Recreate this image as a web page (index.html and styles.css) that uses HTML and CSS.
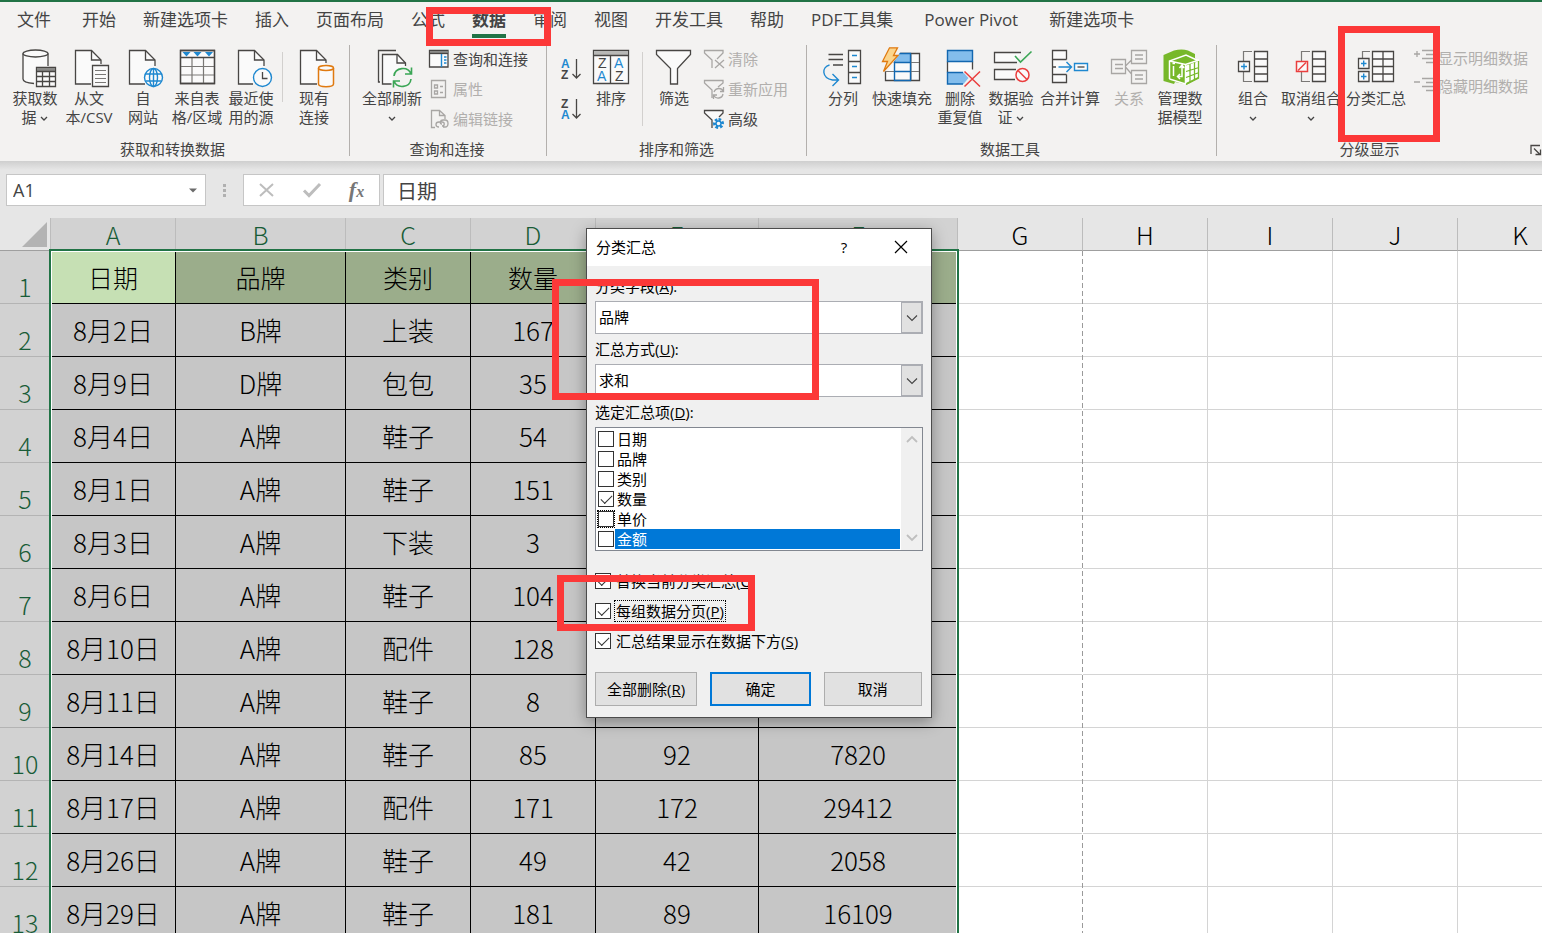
FILE: index.html
```html
<!DOCTYPE html>
<html lang="zh-CN">
<head>
<meta charset="utf-8">
<title>分类汇总</title>
<link rel="stylesheet" href="styles.css">
</head>
<body>
<header class="ribbon">
  <nav class="tabs">
    <a class="tab tab-roomy" href="#">文件</a>
    <a class="tab" href="#">开始</a>
    <a class="tab" href="#">新建选项卡</a>
    <a class="tab" href="#">插入</a>
    <a class="tab" href="#">页面布局</a>
    <a class="tab" href="#">公式</a>
    <a class="tab tab-active" href="#">数据</a>
    <a class="tab" href="#">审阅</a>
    <a class="tab" href="#">视图</a>
    <a class="tab" href="#">开发工具</a>
    <a class="tab" href="#">帮助</a>
    <a class="tab tab-roomy" href="#">PDF工具集</a>
    <a class="tab tab-roomy" href="#">Power Pivot</a>
    <a class="tab" href="#">新建选项卡</a>
  </nav>
  <div class="groups">
    <section class="group group-get">
      <div class="tools">
        <button class="big w54"><svg class="icon" viewBox="0 0 44 42"><path class="paper" d="M10 6.500V32c0 2 5 4 12.500 4h1V20H35V6.500c0-2-5.500-3.500-12.500-3.500S10 4.500 10 6.500z"/><path class="ink" d="M35 19V6.500M10 6.500V32c0 2.500 5 4 11 4.500"/><ellipse class="ink paper" cx="22.500" cy="6.500" rx="12.500" ry="3.500"/><path class="ink paper" d="M23.500 20.500h19v19h-19z"/><path fill="#8a8a88" d="M24 21h18v3H24z"/><path class="ink" d="M23.500 24.500h19M23.500 29.500h19M23.500 34.500h19M29.500 24.500v15M36.500 24.500v15"/></svg><span>获取数<br>据 <svg class="chev" viewBox="0 0 8 5"><path d="M1 1l3 3 3-3"/></svg></span></button>
        <button class="big w54"><svg class="icon" viewBox="0 0 44 42"><path class="ink paper" d="M24 37H8.500V3.500h16L34 13v4"/><path class="ink" d="M24.500 3.500V13H34"/><path class="ink paper" d="M25.500 18.500h16v21h-16z"/><path class="grey" d="M28 23.500h11M28 27.500h11M28 31.500h11M28 35.500h11"/></svg><span>从文<br>本/CSV</span></button>
        <button class="big w54"><svg class="icon" viewBox="0 0 44 42"><path class="ink paper" d="M24 37H8.500V3.500h16L34 13v6"/><path class="ink" d="M24.500 3.500V13H34"/><g class="blue"><circle class="paper" cx="32.500" cy="30.500" r="9"/><ellipse cx="32.500" cy="30.500" rx="4" ry="9"/><path d="M32.500 21.500v18M24.500 27h16M24.500 34h16"/></g></svg><span>自<br>网站</span></button>
        <button class="big w54"><svg class="icon" viewBox="0 0 44 42"><path class="ink paper" d="M5.500 3.500h34v33h-34z"/><path class="grey" d="M17 11v26M28.500 11v26M6 19.500h33M6 28h33"/><path class="ink" d="M5.500 10.500h34M5.500 3.500h34v33h-34z"/><path fill="#1e88d0" d="M7.500 5h8l-4 4.500zM18.500 5h8l-4 4.500zM30 5h8l-4 4.500z"/></svg><span>来自表<br>格/区域</span></button>
        <button class="big w54"><svg class="icon" viewBox="0 0 44 42"><path class="ink paper" d="M24 37H9.500V3.500h16L35 13v6"/><path class="ink" d="M25.500 3.500V13H35"/><circle class="blue paper" cx="33.500" cy="30.500" r="9"/><path class="ink" d="M33.500 25v6.500h5"/></svg><span>最近使<br>用的源</span></button>
        <i class="sep"></i>
        <button class="big w54"><svg class="icon" viewBox="0 0 44 42"><path class="ink paper" d="M25 37H8.500V3.500h16L34 13v3"/><path class="ink" d="M24.500 3.500V13H34"/><path class="orange paper" d="M26.500 21v16c0 3.500 15 3.500 15 0V21"/><ellipse class="orange paper" cx="34" cy="21" rx="7.500" ry="2.500"/></svg><span>现有<br>连接</span></button>
      </div>
      <h2>获取和转换数据</h2>
    </section>

    <section class="group group-query">
      <div class="tools">
        <button class="big w64"><svg class="icon" viewBox="0 0 44 42"><path class="ink" d="M10 35H8.500V3.500H26"/><path class="ink paper" d="M21.500 37h-9V7.500h15L35.500 16v3"/><path class="ink" d="M27 7.500V16h8.500"/><circle cx="32.500" cy="30.500" r="10" fill="#f3f2f1"/><path class="green" d="M24 29c1-9 14-10 17-2M41.500 20.500V27H35M41 32c-1 9-14 10-17 2M23.500 40.500V34H30"/></svg><span>全部刷新<br><svg class="chev" viewBox="0 0 8 5"><path d="M1 1l3 3 3-3"/></svg></span></button>
        <div class="stack stack-inset">
          <button class="small"><svg viewBox="0 0 22 20"><path class="ink paper" d="M1.500 1.500h18.500v16.500H1.500z"/><path fill="#8a8a88" d="M2 2h17.500v2.500H2z"/><path class="ink" d="M1.500 4.500H20"/><path class="blue" d="M13.500 5v13M16 8h2.500M16 11h2.500M16 14h2.500"/></svg>查询和连接</button>
          <button class="small" disabled><svg viewBox="0 0 22 20"><path class="faint" d="M3.500 1.500h14v17h-14zM6.500 6h3v3h-3zM6.500 12h3v3h-3zM12 7.500h3M12 13.500h3"/></svg>属性</button>
          <button class="small" disabled><svg viewBox="0 0 22 20"><path class="faint" d="M7 18.500H3.500v-17h8l5.500 5V10M11.500 1.500v5H17M11 18c-4 0-4-5 0-5h3c3 0 3 4 0 4M14 15c-3 0-2-4 1-4h2c4 0 4 7 0 7h-2"/></svg>编辑链接</button>
        </div>
      </div>
      <h2>查询和连接</h2>
    </section>

    <section class="group group-sort">
      <div class="tools">
        <div class="sorts">
          <button class="sort" aria-label="升序"><svg viewBox="0 0 24 24"><text class="ltr ltr-blue" x="2" y="11">A</text><text class="ltr" x="2" y="22">Z</text><path class="ink" d="M17.500 2v19M13.500 17l4 4 4-4"/></svg></button>
          <button class="sort" aria-label="降序"><svg viewBox="0 0 24 24"><text class="ltr" x="2" y="11">Z</text><text class="ltr ltr-blue" x="2" y="22">A</text><path class="ink" d="M17.500 2v19M13.500 17l4 4 4-4"/></svg></button>
        </div>
        <button class="big w54"><svg class="icon" viewBox="0 0 44 42"><path class="ink paper" d="M4.500 3.500h35v33h-35z"/><path fill="#b8b8b6" d="M5 4h34v4H5z"/><path class="ink" d="M4.500 8.500h35M21.500 8.500v28"/><text class="ltr ltr-thin" x="9" y="21">Z</text><text class="ltr ltr-thin ltr-blue" x="8" y="34">A</text><text class="ltr ltr-thin ltr-blue" x="25" y="21">A</text><text class="ltr ltr-thin" x="26" y="34">Z</text></svg><span>排序</span></button>
        <i class="sep sep-tall"></i>
        <button class="big w54"><svg class="icon" viewBox="0 0 44 42"><path class="ink paper" d="M4.500 3.500h34v4l-13 14v15.500h-7V21.500l-14-14z"/></svg><span>筛选</span></button>
        <div class="stack">
          <button class="small" disabled><svg viewBox="0 0 22 20"><path class="faint" d="M9 19V11L1.500 4V1.500H20V4l-6 6M12 11l9 8M21 11l-9 8"/></svg>清除</button>
          <button class="small" disabled><svg viewBox="0 0 22 20"><path class="faint" d="M9 19V11L1.500 4V1.500H20V4l-5 4M11 13c2-5 8-4 9-1M20.500 8v4.500H17M20 15c-1 5-7 5-9 2M10.500 20v-4H14"/></svg>重新应用</button>
          <button class="small"><svg viewBox="0 0 22 20"><path class="ink paper" d="M9 19V11L1.500 4V1.500H20V4l-4 4"/><path fill="none" stroke="#1e88d0" stroke-width="3" stroke-dasharray="2.500 1.690" d="M15.500 10.500a4 4 0 1 1-.01 0z"/><circle class="blue paper" cx="15.500" cy="14.500" r="2.500"/></svg>高级</button>
        </div>
      </div>
      <h2>排序和筛选</h2>
    </section>

    <section class="group group-data">
      <div class="tools">
        <button class="big w54"><svg class="icon" viewBox="0 0 44 42"><path class="ink" d="M7.500 7.500H22M7.500 12.500H22M12 18h10"/><path class="ink paper" d="M27.500 3.500h12v33h-12z"/><path class="ink" d="M27.500 14.500h12M27.500 25.500h12"/><path class="blue" d="M31 8.500h5M31 19.500h5M31 30.500h5M8.500 18c-8 2-8 13 3 15h6M11.500 27l6 6-6 6"/></svg><span>分列</span></button>
        <button class="big w64"><svg class="icon" viewBox="0 0 44 42"><path class="ink paper" d="M5.500 6.500h34v27h-34z"/><path class="grey" d="M5 15.500h34M5 24.500h34M31 7v26"/><path fill="#83bdec" d="M14.500 6.500h16v9h-16z"/><path class="navy" d="M14.500 6.500h16v27h-16zM14.500 15.500h16M14.500 24.500h16"/><path fill="#f3f2f1" d="M3 4h18L8 24H3z"/><path fill="#fbd58c" stroke="#e07a10" stroke-width="1.300" d="M9.500.8h8l-4 7.700h4.500L3.500 24.500l4-10h-5z"/></svg><span>快速填充</span></button>
        <button class="big w52"><svg class="icon" viewBox="0 0 44 42"><path class="paper" d="M9.500 14.500h25v11h-25z"/><path class="ink" d="M9.500 14.500v11M34.500 14.500v8"/><path fill="#83bdec" d="M9.500 3.500h25v11h-25zM9.500 25.500h16l5 5.500-5 6h-16z"/><path class="navy" d="M9.500 3.500h25v11h-25zM25 37H9.500V25.500H25"/><path class="red" d="M26.500 24.500l15.500 15M42 24.500l-15.500 15"/></svg><span>删除<br>重复值</span></button>
        <button class="big w50"><svg class="icon" viewBox="0 0 44 42"><path class="ink paper" d="M32 5.500H5.500v10H28M27 22.500H5.500v10H26"/><path class="green" d="M26 9l5.500 6L42.500 4.500"/><circle class="red paper" cx="33.500" cy="28" r="6.500"/><path class="red" d="M29 23.500l9 9"/></svg><span>数据验<br>证 <svg class="chev" viewBox="0 0 8 5"><path d="M1 1l3 3 3-3"/></svg></span></button>
        <button class="big w68"><svg class="icon" viewBox="0 0 44 42"><path class="paper" d="M4.500 3.500h14v32h-14z"/><path class="ink" d="M18.500 12.500v-9h-14v32h14v-8M4.500 12.500h14M4.500 27.500h14M4.500 20H8"/><path class="blue" d="M10.500 20h13M18.500 15l5 5-5 5"/><path class="blue paper" d="M26.500 16.500h13v7h-13z"/><path class="ink" d="M29.500 20h7"/></svg><span>合并计算</span></button>
        <button class="big w50" disabled><svg class="icon" viewBox="0 0 44 42"><path class="faint" d="M4.500 12.500h14v14h-14zM24.500 3.500h15v13h-15zM24.500 23.500h15v13h-15zM18.500 19l6-6M18.500 20l6 7M8 17.500h8M8 21.500h8M28 8h8M28 12h8M28 28h8M28 32h8"/></svg><span>关系</span></button>
        <button class="big w52"><svg class="icon" viewBox="0 0 44 42"><path fill="#77b82a" d="M5.500 8L16 3.500c5-1.500 10-1.500 14 0L37 7v4.500l4 2V31l-12 6.500L17 35l-1 2-10.500-3z"/><g fill="none" stroke="#fff" stroke-width="1.500"><path d="M11.500 32V14L28 8l13 6M11.500 14l16 3.500L41 13M11.500 32L27.500 37V17.500M15.500 19v10M14.500 16.500h2.500M20 29.500h4V19M21.500 21l2.500-3 2 3M22 27l-2.500 2.500L22 32"/></g><path fill="#fff" d="M28 18.500l12-4V30l-12 6z"/><path fill="none" stroke="#77b82a" stroke-width="1.300" d="M28 24.500l13-4M28 30.500l13-5M32 17v18M36.500 15.500V33M40.500 14v17L28 37.500"/></svg><span>管理数<br>据模型</span></button>
      </div>
      <h2>数据工具</h2>
    </section>

    <section class="group group-outline">
      <div class="tools">
        <button class="big w56"><svg class="icon" viewBox="0 0 44 42"><path class="grey" d="M21 4.500h-8.500v30H21"/><path class="ink paper" d="M23.500 4.500h13v30h-13z"/><path class="ink" d="M23.500 12h13M23.500 19.500h13M23.500 27h13"/><path class="ink paper" d="M7.500 14.500h11v10h-11z"/><path class="blue" d="M13 16.500v6M10 19.500h6"/></svg><span>组合<br><svg class="chev" viewBox="0 0 8 5"><path d="M1 1l3 3 3-3"/></svg></span></button>
        <button class="big w60"><svg class="icon" viewBox="0 0 44 42"><path class="grey" d="M21 4.500h-8.500v30H21"/><path class="ink paper" d="M23.500 4.500h13v30h-13z"/><path class="ink" d="M23.500 12h13M23.500 19.500h13M23.500 27h13"/><path class="red paper" d="M7.500 14.500h11v10h-11z"/><path class="red" d="M9 23.500l8-8"/></svg><span>取消组合<br><svg class="chev" viewBox="0 0 8 5"><path d="M1 1l3 3 3-3"/></svg></span></button>
        <button class="big w70"><svg class="icon" viewBox="0 0 44 42"><path class="grey" d="M16 4.500H8.500V11"/><path class="ink paper" d="M18.500 4.500h21v30h-21z"/><path class="ink" d="M18.500 12h21M18.500 19.500h21M18.500 27h21M29 4.500v30"/><path class="ink paper" d="M4.500 11.500h10.500v10H4.500zM4.500 24.500h10.500v10H4.500z"/><path class="blue" d="M9.700 13.500v6M7 16.500h5.500M9.700 26.500v6M7 29.500h5.500"/></svg><span>分类汇总</span></button>
        <div class="stack stack-tight">
          <button class="small" disabled><svg viewBox="0 0 22 20"><path class="faint" d="M1 6h6M4 3v6M9 2.500h11M13 6.500h7M9 10.500h11M13 14.500h7"/></svg>显示明细数据</button>
          <button class="small" disabled><svg viewBox="0 0 22 20"><path class="faint" d="M1 6h6M9 2.500h11M13 6.500h7M9 10.500h11M13 14.500h7"/></svg>隐藏明细数据</button>
        </div>
      </div>
      <h2>分级显示</h2>
      <button class="launcher" aria-label="分级显示设置"><svg viewBox="0 0 12 12"><path class="ink" d="M1 10V1.500h9M4 4.500l6 6M10.500 5.500v5h-5"/></svg></button>
    </section>
  </div>
</header>

<div class="formula-bar">
  <div class="name-box">
    <input type="text" value="A1" aria-label="名称框">
    <button aria-label="名称列表"><svg viewBox="0 0 8 5"><path fill="#6b6b6b" d="M0 .5h8l-4 4z"/></svg></button>
  </div>
  <div class="dots"><i></i><i></i><i></i></div>
  <div class="entry">
    <button aria-label="取消输入"><svg viewBox="0 0 18 16"><path fill="none" stroke="#bdbdbd" stroke-width="2" d="M2 2l13 12M15 2L2 14"/></svg></button>
    <button aria-label="确认输入"><svg viewBox="0 0 18 16"><path fill="none" stroke="#bdbdbd" stroke-width="3" d="M1 8.500l5 5L17 2"/></svg></button>
    <button class="fx" aria-label="插入函数">f<small>x</small></button>
  </div>
  <input class="formula" type="text" value="日期" aria-label="编辑栏">
</div>

<main class="sheet">
  <table class="grid">
    <colgroup><col class="c-num"><col class="c-std"><col class="c-b"><col class="c-std"><col class="c-std"><col class="c-e"><col class="c-f"><col class="c-std"><col class="c-std"><col class="c-std"><col class="c-std"><col class="c-std"></colgroup>
    <thead>
      <tr><th class="corner"><svg viewBox="0 0 25 25"><path fill="#b3b3b3" d="M25 0v25H0z"/></svg></th><th class="on">A</th><th class="on">B</th><th class="on">C</th><th class="on">D</th><th class="on">E</th><th class="on">F</th><th>G</th><th>H</th><th>I</th><th>J</th><th>K</th></tr>
    </thead>
    <tbody>
      <tr class="titles"><th>1</th><td class="sel active">日期</td><td class="sel">品牌</td><td class="sel">类别</td><td class="sel">数量</td><td class="sel"></td><td class="sel"></td><td></td><td></td><td></td><td></td><td></td></tr>
      <tr><th>2</th><td class="sel">8月2日</td><td class="sel">B牌</td><td class="sel">上装</td><td class="sel">167</td><td class="sel"></td><td class="sel"></td><td></td><td></td><td></td><td></td><td></td></tr>
      <tr><th>3</th><td class="sel">8月9日</td><td class="sel">D牌</td><td class="sel">包包</td><td class="sel">35</td><td class="sel"></td><td class="sel"></td><td></td><td></td><td></td><td></td><td></td></tr>
      <tr><th>4</th><td class="sel">8月4日</td><td class="sel">A牌</td><td class="sel">鞋子</td><td class="sel">54</td><td class="sel"></td><td class="sel"></td><td></td><td></td><td></td><td></td><td></td></tr>
      <tr><th>5</th><td class="sel">8月1日</td><td class="sel">A牌</td><td class="sel">鞋子</td><td class="sel">151</td><td class="sel"></td><td class="sel"></td><td></td><td></td><td></td><td></td><td></td></tr>
      <tr><th>6</th><td class="sel">8月3日</td><td class="sel">A牌</td><td class="sel">下装</td><td class="sel">3</td><td class="sel"></td><td class="sel"></td><td></td><td></td><td></td><td></td><td></td></tr>
      <tr><th>7</th><td class="sel">8月6日</td><td class="sel">A牌</td><td class="sel">鞋子</td><td class="sel">104</td><td class="sel"></td><td class="sel"></td><td></td><td></td><td></td><td></td><td></td></tr>
      <tr><th>8</th><td class="sel">8月10日</td><td class="sel">A牌</td><td class="sel">配件</td><td class="sel">128</td><td class="sel"></td><td class="sel"></td><td></td><td></td><td></td><td></td><td></td></tr>
      <tr><th>9</th><td class="sel">8月11日</td><td class="sel">A牌</td><td class="sel">鞋子</td><td class="sel">8</td><td class="sel"></td><td class="sel"></td><td></td><td></td><td></td><td></td><td></td></tr>
      <tr><th>10</th><td class="sel">8月14日</td><td class="sel">A牌</td><td class="sel">鞋子</td><td class="sel">85</td><td class="sel">92</td><td class="sel">7820</td><td></td><td></td><td></td><td></td><td></td></tr>
      <tr><th>11</th><td class="sel">8月17日</td><td class="sel">A牌</td><td class="sel">配件</td><td class="sel">171</td><td class="sel">172</td><td class="sel">29412</td><td></td><td></td><td></td><td></td><td></td></tr>
      <tr><th>12</th><td class="sel">8月26日</td><td class="sel">A牌</td><td class="sel">鞋子</td><td class="sel">49</td><td class="sel">42</td><td class="sel">2058</td><td></td><td></td><td></td><td></td><td></td></tr>
      <tr><th>13</th><td class="sel">8月29日</td><td class="sel">A牌</td><td class="sel">鞋子</td><td class="sel">181</td><td class="sel">89</td><td class="sel">16109</td><td></td><td></td><td></td><td></td><td></td></tr>
    </tbody>
  </table>
  <div class="selection"></div>
  <div class="page-break"></div>
</main>

<form class="dialog" role="dialog" aria-labelledby="dlg-title">
  <div class="dialog-title">
    <span id="dlg-title">分类汇总</span>
    <button type="button" class="help" aria-label="帮助">?</button>
    <button type="button" class="close" aria-label="关闭"><svg viewBox="0 0 14 14"><path fill="none" stroke="#000" stroke-width="1.200" d="M1 1l12 12M13 1L1 13"/></svg></button>
  </div>
  <div class="dialog-body">
    <label class="caption" for="field">分类字段(<u>A</u>):</label>
    <div class="combo"><select id="field"><option>品牌</option></select><span><svg viewBox="0 0 12 8"><path d="M1 1.500l5 5 5-5"/></svg></span></div>
    <label class="caption" for="method">汇总方式(<u>U</u>):</label>
    <div class="combo"><select id="method"><option>求和</option></select><span><svg viewBox="0 0 12 8"><path d="M1 1.500l5 5 5-5"/></svg></span></div>
    <div class="caption" id="items">选定汇总项(<u>D</u>):</div>
    <div class="list" role="group" aria-labelledby="items">
      <div class="list-items">
        <label><input type="checkbox"><span>日期</span></label>
        <label><input type="checkbox"><span>品牌</span></label>
        <label><input type="checkbox"><span>类别</span></label>
        <label><input type="checkbox" checked><span>数量</span></label>
        <label class="focus"><input type="checkbox"><span>单价</span></label>
        <label class="picked"><input type="checkbox"><span>金额</span></label>
      </div>
      <div class="scroll"><svg viewBox="0 0 12 8"><path d="M1 7l5-5 5 5"/></svg><svg viewBox="0 0 12 8"><path d="M1 1l5 5 5-5"/></svg></div>
    </div>
    <div class="checks">
      <label><input type="checkbox" checked><span>替换当前分类汇总(<u>C</u>)</span></label>
      <label><input type="checkbox" checked><span class="dotted">每组数据分页(<u>P</u>)</span></label>
      <label><input type="checkbox" checked><span>汇总结果显示在数据下方(<u>S</u>)</span></label>
    </div>
    <div class="actions">
      <button type="button">全部删除(<u>R</u>)</button>
      <button type="submit" class="primary">确定</button>
      <button type="button">取消</button>
    </div>
  </div>
</form>

<div class="mark mark-tab"></div>
<div class="mark mark-subtotal"></div>
<div class="mark mark-fields"></div>
<div class="mark mark-paging"></div>
</body>
</html>
```
FILE: styles.css
```css
* { box-sizing: border-box; }
html, body { height: 100%; }
body {
  margin: 0;
  position: relative;
  display: flex;
  flex-direction: column;
  overflow: hidden;
  background: #fff;
  color: #444;
  font: 15px/20px "Open Sans", "Noto Sans CJK SC", sans-serif;
}
button, input, select { font: inherit; color: inherit; margin: 0; padding: 0; border: 0; background: none; border-radius: 0; }
svg { display: block; flex: none; overflow: visible; }

/* Ribbon */
.ribbon { flex: none; border-top: 2px solid #217346; background: #f3f2f1; padding-bottom: 5px; }
.tabs { display: flex; gap: 27px; height: 43px; padding-left: 17px; }
.tab { position: relative; height: 36px; line-height: 36px; font-size: 17px; color: #444; text-decoration: none; white-space: nowrap; }
.tab-roomy { padding-right: 4px; }
.tab-active { font-weight: bold; }
.tab-active::after { content: ""; position: absolute; left: 0; right: 0; bottom: 0; height: 4px; background: #217346; }
.groups { display: flex; }
.group { position: relative; flex: none; display: flex; flex-direction: column; height: 111px; border-right: 1px solid #b3b0ad; }
.group-get { width: 350px; padding-left: 8px; }
.group-query { width: 197px; padding-left: 10px; }
.group-sort { width: 260px; padding-left: 12px; }
.group-data { width: 410px; padding-left: 9px; }
.group-outline { flex: 1; padding-left: 8px; border-right: 0; }
.tools { display: flex; align-items: flex-start; flex: 1; }
.group h2 { margin: 0; padding-right: 12px; font-size: 15px; font-weight: normal; line-height: 20px; text-align: center; height: 17px; }
.group-outline h2 { padding-right: 28px; }
.big { flex: none; padding-top: 2px; display: flex; flex-direction: column; align-items: center; line-height: 19px; text-align: center; white-space: nowrap; }
.icon { width: 44px; height: 42px; }
.w50 { width: 50px; }
.w52 { width: 52px; }
.w54 { width: 54px; }
.w56 { width: 56px; }
.w60 { width: 60px; }
.w64 { width: 64px; }
.w68 { width: 68px; }
.w70 { width: 70px; }
.chev { display: inline-block; width: 8px; height: 5px; vertical-align: 2px; }
.chev path { fill: none; stroke: #444; stroke-width: 1.3; }
.sep { width: 1px; height: 50px; margin: 7px 4px 0; background: #d2d0ce; }
.sep-tall { height: 74px; }
.stack { display: flex; flex-direction: column; }
.stack-inset { padding-left: 2px; }
.small { display: flex; align-items: center; gap: 3px; height: 30px; padding: 0 2px 2px; white-space: nowrap; }
.small svg { width: 22px; height: 20px; }
.stack-tight .small { height: 28px; }
button:disabled { color: #b1afad; }
.sorts { display: flex; flex-direction: column; padding-top: 4px; }
.sort { width: 25px; height: 40px; }
.sort svg { width: 24px; height: 24px; }
.launcher { position: absolute; right: 0; bottom: 0; }
.launcher svg { width: 12px; height: 12px; }

.ink { fill: none; stroke: #484644; stroke-width: 1.3; }
.grey { fill: none; stroke: #7a7876; stroke-width: 1.2; }
.faint { fill: none; stroke: #a8a6a4; stroke-width: 1.3; }
.blue { fill: none; stroke: #1e88d0; stroke-width: 1.4; }
.navy { fill: none; stroke: #1267b0; stroke-width: 1.4; }
.green { fill: none; stroke: #3aa655; stroke-width: 1.6; }
.orange { fill: none; stroke: #e07a10; stroke-width: 1.5; }
.red { fill: none; stroke: #ea3e3e; stroke-width: 1.5; }
.paper { fill: #fafafa; }
.ltr { font: bold 12px/1 "Liberation Sans", sans-serif; fill: #444; }
.ltr-thin { font-weight: normal; font-size: 14px; }
.ltr-blue { fill: #1e88d0; }

/* Formula bar */
.formula-bar {
  flex: none;
  display: flex;
  height: 57px;
  padding: 13px 0 12px 6px;
  background: linear-gradient(#cfcfcf, #e6e6e6 9px);
  color: #444;
}
.name-box { display: flex; width: 200px; background: #fff; border: 1px solid #c6c6c6; }
.name-box input { flex: 1; min-width: 0; padding-left: 6px; font-size: 18px; }
.name-box button { width: 24px; display: grid; place-items: center; }
.name-box svg { width: 8px; height: 5px; }
.dots { width: 37px; display: flex; flex-direction: column; align-items: center; justify-content: center; gap: 2px; }
.dots i { width: 3px; height: 3px; background: #b0b0b0; }
.entry { display: flex; width: 137px; margin-right: 3px; background: #fff; border: 1px solid #c6c6c6; }
.entry button { flex: 1; display: grid; place-items: center; }
.entry svg { width: 18px; height: 16px; }
.entry .fx { display: flex; align-items: center; justify-content: center; font: italic bold 22px "Liberation Serif", serif; color: #777; }
.fx small { font-size: 16px; padding-top: 4px; }
.formula { flex: 1; min-width: 0; padding-left: 13px; background: #fff; border: 1px solid #c6c6c6; border-right: 0; font-size: 20px; }

/* Worksheet */
.sheet { position: relative; flex: 1; min-height: 0; overflow: hidden; font-family: "Noto Sans CJK SC", sans-serif; font-weight: 300; color: #000; }
.grid { width: 1583px; table-layout: fixed; border-spacing: 0; font-size: 26px; line-height: 30px; }
.c-num { width: 51px; }
.c-std { width: 125px; }
.c-b { width: 170px; }
.c-e { width: 163px; }
.c-f { width: 199px; }
.grid th, .grid td { padding: 0; text-align: center; font-weight: 300; }
.grid thead th { height: 33px; background: #e6e6e6; border-right: 1px solid #bcbcbc; border-bottom: 1px solid #9f9f9f; font-size: 25px; }
.grid thead .on { background: #d2d2d2; color: #185c37; }
.grid thead .corner { padding: 0 3px 3px 0; vertical-align: bottom; }
.corner svg { width: 25px; height: 25px; margin-left: auto; }
.grid tbody th { height: 53px; padding-bottom: 2px; vertical-align: bottom; font-size: 25px; background: #d2d2d2; color: #185c37; border-right: 1px solid #9f9f9f; border-bottom: 1px solid #b4b4b4; }
.grid td { border-right: 1px solid #d4d4d4; border-bottom: 1px solid #d4d4d4; }
.grid .sel { background: #c6c6c6; border-color: #000; }
.grid .titles .sel { background: #9bad8b; font-size: 25px; }
.grid .titles .active { background: #c6e0b4; }
.selection { position: absolute; left: 49px; top: 31px; bottom: -9px; width: 910px; border: 2px solid #217346; box-shadow: inset 0 0 0 1px #fff; }
.page-break { position: absolute; left: 1082px; top: 33px; bottom: 0; width: 1px; background: repeating-linear-gradient(#9a9a9a 0 5px, #fff 5px 8px); }

/* Subtotal dialog */
.dialog { position: absolute; left: 586px; top: 228px; width: 346px; border: 1px solid #4c4c4c; background: #f0f0f0; color: #000; box-shadow: 0 4px 14px rgba(0, 0, 0, .35); }
.dialog-title { display: flex; align-items: center; height: 37px; background: #fff; padding: 0 0 2px 9px; }
.dialog-title span { flex: 1; }
.dialog-title button { display: grid; place-items: center; height: 35px; }
.help { width: 52px; }
.close { width: 61px; }
.close svg { width: 14px; height: 14px; }
.dialog-body { display: flex; flex-direction: column; padding: 10px 8px 11px; }
.caption { margin-bottom: 5px; }
.combo { display: grid; grid-template-columns: 1fr 21px; height: 33px; margin-bottom: 5px; border: 1px solid #abadb3; background: #fff; }
.combo select { grid-area: 1 / 1 / 2 / 3; appearance: none; padding: 0 0 2px 3px; outline: 0; }
.combo span { grid-area: 1 / 2; display: grid; place-items: center; background: #e1e1e1; border: 1px solid #abadb3; pointer-events: none; }
.combo svg { width: 12px; height: 8px; }
.combo path { fill: none; stroke: #444; stroke-width: 1.1; }
.list { display: flex; padding: 1px 0 1px 2px; border: 1px solid #828790; background: #fff; }
.list-items { flex: 1; }
.list label { display: flex; align-items: center; height: 20px; }
.list label span { flex: 1; padding-left: 2px; margin-left: 1px; }
.picked span { background: #0078d7; color: #fff; }
.focus input { outline: 1px dotted #000; }
.scroll { width: 21px; padding: 7px 0 8px; display: flex; flex-direction: column; align-items: center; justify-content: space-between; background: #f0f0f0; margin: -1px 0 -1px 1px; }
.scroll svg { width: 12px; height: 8px; }
.scroll path { fill: none; stroke: #bfbfbf; stroke-width: 1.8; }
input[type="checkbox"] { appearance: none; flex: none; display: grid; place-items: center; width: 16px; height: 16px; border: 1px solid #333; background: #fff; }
input[type="checkbox"]:checked::after { content: ""; width: 10px; height: 5px; margin-bottom: 3px; border: solid #333; border-width: 0 0 1px 1px; transform: rotate(-45deg); }
.checks { margin: 15px 0 16px; }
.checks label { display: flex; align-items: center; height: 30px; gap: 3px; }
.checks span { padding: 0 1px; border: 1px solid transparent; }
.checks .dotted { border: 1px dotted #000; }
.actions { display: flex; gap: 13px; margin-right: 1px; }
.actions button { flex: 99; height: 34px; border: 1px solid #adadad; background: #e1e1e1; white-space: nowrap; }
.actions button:first-child { flex: 103; }
.actions .primary { border: 2px solid #0078d7; }

/* Red call-out frames */
.mark { position: absolute; border: 7px solid #fc3838; pointer-events: none; }
.mark-tab { left: 426px; top: 7px; width: 125px; height: 39px; }
.mark-subtotal { left: 1338px; top: 26px; width: 102px; height: 116px; }
.mark-fields { left: 552px; top: 279px; width: 267px; height: 121px; }
.mark-paging { left: 557px; top: 575px; width: 198px; height: 56px; }
```
